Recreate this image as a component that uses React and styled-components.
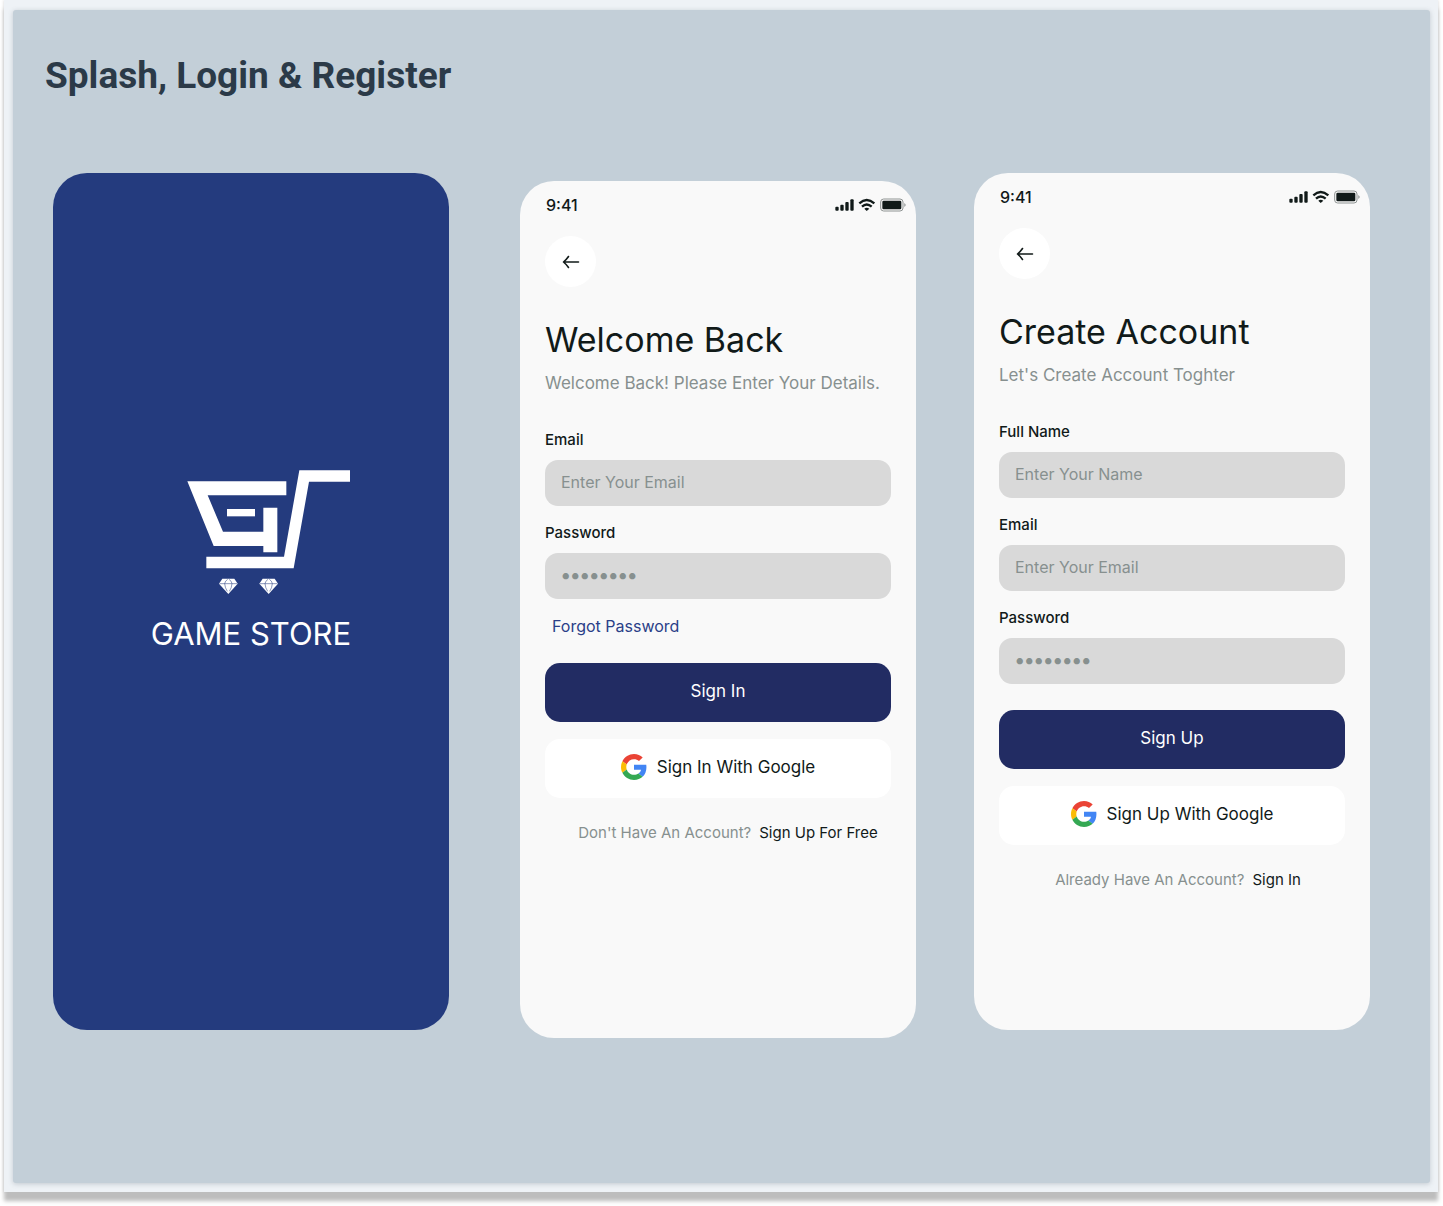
import React, { useId } from "react";
import styled, { createGlobalStyle } from "styled-components";

const GlobalStyle = createGlobalStyle`
  *, *::before, *::after { box-sizing: border-box; }
  body { margin: 0; background: #ffffff; }
  body, button, input { font-family: Inter, "Liberation Sans", sans-serif; }
`;

const Page = styled.div`
  padding: 0 5px 14px 4px;
`;

const Frame = styled.div`
  padding: 10px 8px 9px 9px;
  background: #eef2f6;
  box-shadow: 0 9px 4px 0 #bdbdbd, 0 0 3px rgba(0, 0, 0, 0.18);
`;

const Board = styled.main`
  padding: 44px 60px 145px 40px;
  border-radius: 3px;
  background: #c3cfd8;
  box-shadow: 0 1px 5px rgba(90, 105, 120, 0.3);
`;

const BoardTitle = styled.h1`
  margin: 0 0 75px -8px;
  font-family: Roboto, "Liberation Sans", sans-serif;
  font-size: 37px;
  line-height: 44px;
  font-weight: 700;
  color: #2b3a48;
`;

const Screens = styled.div`
  display: flex;
  align-items: flex-start;
  gap: 58px;
`;

const Phone = styled.section`
  flex: 1 1 0;
  min-width: 0;
  aspect-ratio: 396 / 857;
  margin-top: ${(p) => (p.$drop ? "8px" : "0")};
  border-radius: 34px;
  background: #f9f9f9;
  color: #111a19;
`;

const Splash = styled(Phone)`
  display: flex;
  flex-direction: column;
  align-items: center;
  justify-content: center;
  margin-right: 13px;
  padding-bottom: 80px;
  background: #243b7e;
  color: #ffffff;
`;

const Logo = styled.svg`
  width: 163px;
  height: 125px;
  margin-left: 34px;
`;

const Brand = styled.p`
  margin: 19px 0 0;
  font-size: 31px;
  line-height: 40px;
`;

const StatusBar = styled.header`
  display: flex;
  align-items: center;
  justify-content: space-between;
  height: 48px;
  padding: 0 9px 0 26px;
  font-size: 16px;
  font-weight: 500;
`;

const Body = styled.div`
  display: flex;
  flex-direction: column;
  padding: 7px 25px 0;
`;

const BackButton = styled.button`
  display: grid;
  place-items: center;
  width: 51px;
  height: 51px;
  padding: 0;
  border: 0;
  border-radius: 50%;
  background: #ffffff;
  color: #111a19;
`;

const Heading = styled.h2`
  margin: 33px 0 0;
  font-size: 34px;
  line-height: 40px;
  font-weight: 400;
  white-space: nowrap;
`;

const Lead = styled.p`
  margin: 11px 0 35px;
  font-size: 17px;
  line-height: 24px;
  color: #87908f;
  white-space: nowrap;
`;

const Form = styled.form`
  display: flex;
  flex-direction: column;
`;

const Field = styled.div`
  display: flex;
  flex-direction: column;
  margin-bottom: 17px;
`;

const Label = styled.label`
  margin-bottom: 10px;
  font-size: 15px;
  line-height: 20px;
  font-weight: 500;
`;

const Input = styled.input`
  width: 100%;
  height: 46px;
  padding: 0 16px 3px;
  border: 0;
  border-radius: 13px;
  background: #d9d9d9;
  font-size: 16px;
  color: #111a19;
  &::placeholder { color: #87908f; opacity: 1; }
  &[type="password"] {
    font-size: 20px;
    font-weight: 700;
  }
`;

const ForgotLink = styled.a`
  align-self: flex-start;
  margin: 0 0 10px 7px;
  font-size: 16px;
  line-height: 20px;
  color: #2a3f88;
  text-decoration: none;
`;

const Action = styled.button`
  display: flex;
  align-items: center;
  justify-content: center;
  gap: 10px;
  height: 59px;
  margin-top: 17px;
  padding: 0 0 3px;
  border: 0;
  border-radius: 15px;
  background: ${(p) => (p.$plain ? "#ffffff" : "#222c63")};
  color: ${(p) => (p.$plain ? "#111a19" : "#ffffff")};
  font-size: 17px;
  line-height: 24px;
`;

const SubmitAction = styled(Action)`
  margin-top: ${(p) => p.$gap}px;
`;

const Footnote = styled.p`
  display: flex;
  justify-content: center;
  gap: 8px;
  margin: 25px 0 0;
  padding-left: ${(p) => p.$indent}px;
  font-size: 15px;
  line-height: 20px;
  color: #87908f;
  white-space: nowrap;
`;

const FootLink = styled.a`
  color: #111a19;
  text-decoration: none;
`;

function CartLogo() {
  return (
    <Logo viewBox="141 59 489 375" fill="#fff" role="img" aria-label="Game Store logo">
      <path d="M142 93H439V135H203L249 244H370V172H412V306H370V287H221Z" />
      <path d="M261 176H345V198H261Z" />
      <path d="M478 60H630V94H507L461 354H199V319H432Z" />
      <Gem x={237} />
      <Gem x={358} />
    </Logo>
  );
}

function Gem({ x }) {
  return (
    <g transform={`translate(${x} 385)`}>
      <path d="M10 0H46L56 15L28 46L0 15Z" />
      <path
        d="M2 15H54M26 2Q18 7 17 15Q18 28 25 38M30 2Q38 7 39 15Q38 28 31 38"
        fill="none"
        stroke="#243b7e"
        strokeWidth="1.6"
      />
    </g>
  );
}

function StatusIcons() {
  return (
    <svg width="72" height="14" viewBox="944 86 216 42" fill="#111a19" aria-hidden="true">
      <rect x="945" y="112" width="10" height="12" rx="3" />
      <rect x="960" y="106" width="10" height="18" rx="3" />
      <rect x="975" y="98" width="10" height="26" rx="3" />
      <rect x="990" y="90" width="10" height="34" rx="3" />
      <g fill="none" stroke="#111a19" strokeWidth="7">
        <path d="M1017 102Q1039 82 1062 102" />
        <path d="M1025 112Q1039 99 1054 112" />
      </g>
      <path d="M1032 118Q1039 112 1047 118L1039 125Z" />
      <rect x="1081" y="89" width="67" height="36" rx="9" fill="none" stroke="#8f9493" strokeWidth="3" />
      <rect x="1086" y="94" width="57" height="26" rx="4" />
      <path d="M1152 101Q1160 107 1152 113Z" fill="#8f9493" />
    </svg>
  );
}

function ArrowLeft() {
  return (
    <svg width="18" height="14" viewBox="0 0 18 14" fill="none" stroke="currentColor" strokeWidth="1.6" strokeLinecap="round" strokeLinejoin="round" aria-hidden="true">
      <path d="M16.5 7H1.5M6.5 1.5Q4.5 4.5 1.5 7Q4.5 9.5 6.5 12.5" />
    </svg>
  );
}

function GoogleMark() {
  return (
    <svg width="26" height="26" viewBox="0 0 48 48" aria-hidden="true">
      <path fill="#EA4335" d="M24 9.5c3.54 0 6.71 1.22 9.21 3.6l6.85-6.85C35.9 2.38 30.47 0 24 0 14.62 0 6.51 5.38 2.56 13.22l7.98 6.19C12.43 13.72 17.74 9.5 24 9.5z" />
      <path fill="#4285F4" d="M46.98 24.55c0-1.57-.15-3.09-.38-4.55H24v9.02h12.94c-.58 2.96-2.26 5.48-4.78 7.18l7.73 6c4.51-4.18 7.09-10.36 7.09-17.65z" />
      <path fill="#FBBC05" d="M10.53 28.59c-.48-1.45-.76-2.99-.76-4.59s.27-3.14.76-4.59l-7.98-6.19C.92 16.46 0 20.12 0 24c0 3.88.92 7.54 2.56 10.78l7.97-6.19z" />
      <path fill="#34A853" d="M24 48c6.48 0 11.93-2.13 15.89-5.81l-7.73-6c-2.15 1.45-4.92 2.3-8.16 2.3-6.26 0-11.57-4.22-13.47-9.91l-7.98 6.19C6.51 42.62 14.62 48 24 48z" />
    </svg>
  );
}

function TextField({ label, ...rest }) {
  const id = useId();
  return (
    <Field>
      <Label htmlFor={id}>{label}</Label>
      <Input id={id} {...rest} />
    </Field>
  );
}

function PhoneTop({ title, lead }) {
  return (
    <>
      <BackButton type="button" aria-label="Back">
        <ArrowLeft />
      </BackButton>
      <Heading>{title}</Heading>
      <Lead>{lead}</Lead>
    </>
  );
}

function Status() {
  return (
    <StatusBar>
      <span>9:41</span>
      <StatusIcons />
    </StatusBar>
  );
}

const keepPage = (event) => event.preventDefault();

export default function App() {
  return (
    <>
      <GlobalStyle />
      <Page>
        <Frame>
          <Board>
            <BoardTitle>Splash, Login &amp; Register</BoardTitle>
            <Screens>
              <Splash>
                <CartLogo />
                <Brand>GAME STORE</Brand>
              </Splash>

              <Phone $drop>
                <Status />
                <Body>
                  <PhoneTop title="Welcome Back" lead="Welcome Back! Please Enter Your Details." />
                  <Form onSubmit={keepPage}>
                    <TextField label="Email" type="email" placeholder="Enter Your Email" />
                    <TextField label="Password" type="password" placeholder="••••••••" />
                    <ForgotLink href="#forgot">Forgot Password</ForgotLink>
                    <SubmitAction $gap={17} type="submit">Sign In</SubmitAction>
                    <Action $plain type="button">
                      <GoogleMark />
                      Sign In With Google
                    </Action>
                  </Form>
                  <Footnote $indent={20}>
                    Don't Have An Account? <FootLink href="#register">Sign Up For Free</FootLink>
                  </Footnote>
                </Body>
              </Phone>

              <Phone>
                <Status />
                <Body>
                  <PhoneTop title="Create Account" lead="Let's Create Account Toghter" />
                  <Form onSubmit={keepPage}>
                    <TextField label="Full Name" type="text" placeholder="Enter Your Name" />
                    <TextField label="Email" type="email" placeholder="Enter Your Email" />
                    <TextField label="Password" type="password" placeholder="••••••••" />
                    <SubmitAction $gap={9} type="submit">Sign Up</SubmitAction>
                    <Action $plain type="button">
                      <GoogleMark />
                      Sign Up With Google
                    </Action>
                  </Form>
                  <Footnote $indent={12}>
                    Already Have An Account? <FootLink href="#login">Sign In</FootLink>
                  </Footnote>
                </Body>
              </Phone>
            </Screens>
          </Board>
        </Frame>
      </Page>
    </>
  );
}
